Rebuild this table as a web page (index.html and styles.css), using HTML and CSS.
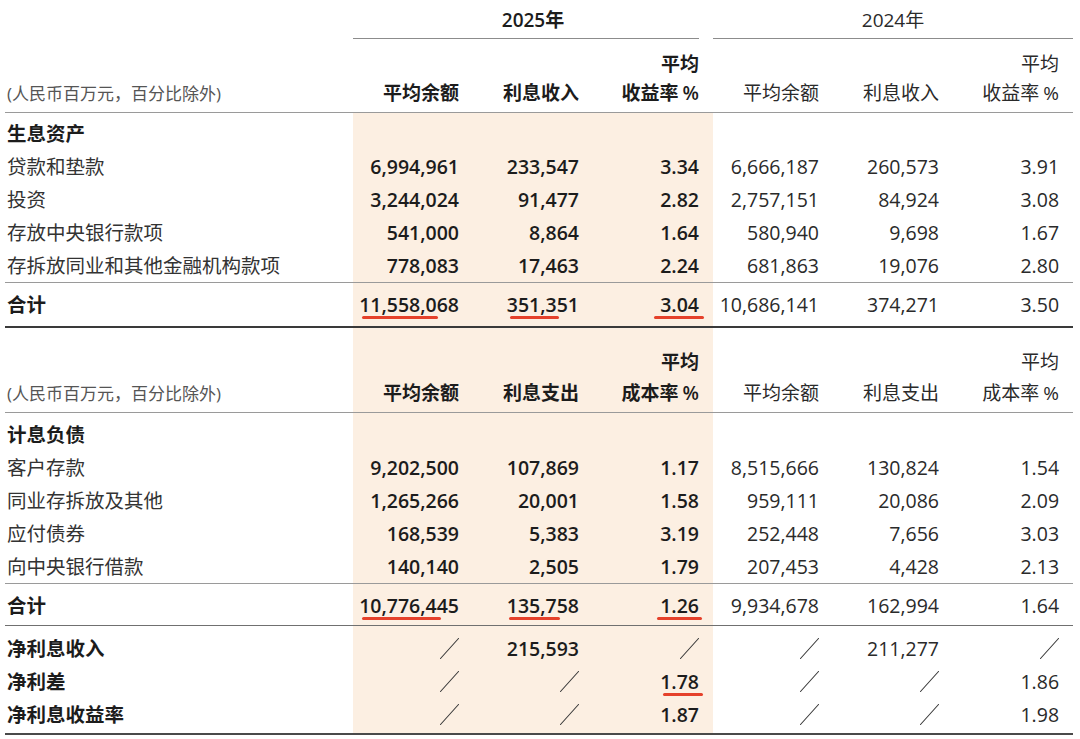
FILE: index.html
```
<!DOCTYPE html>
<html lang="zh-CN">
<head>
<meta charset="utf-8">
<title>平均余额及收益率</title>
<link rel="stylesheet" href="styles.css">
</head>
<body>
<table class="t">
  <colgroup>
    <col class="c-lab"><col class="c-n"><col class="c-n"><col class="c-n"><col class="c-n"><col class="c-n"><col class="c-n">
  </colgroup>
  <thead>
    <tr class="r-yr">
      <th class="lab"></th>
      <th colspan="3" class="yr"><div class="yr-in y25">2025年</div></th>
      <th colspan="3" class="yr"><div class="yr-in y24">2024年</div></th>
    </tr>
    <tr class="r-avg1">
      <th class="lab"></th><th></th><th></th><th class="b">平均</th><th></th><th></th><th>平均</th>
    </tr>
    <tr class="r-hd1">
      <th class="lab unit">(人民币百万元，百分比除外)</th>
      <th class="b">平均余额</th><th class="b">利息收入</th><th class="b">收益率<span class="pct">%</span></th>
      <th>平均余额</th><th>利息收入</th><th>收益率<span class="pct">%</span></th>
    </tr>
  </thead>
  <tbody>
    <tr class="first">
      <td class="lab b">生息资产</td><td class="h"></td><td class="h"></td><td class="h"></td><td></td><td></td><td></td>
    </tr>
    <tr>
      <td class="lab">贷款和垫款</td><td class="h b">6,994,961</td><td class="h b">233,547</td><td class="h b">3.34</td><td>6,666,187</td><td>260,573</td><td>3.91</td>
    </tr>
    <tr>
      <td class="lab">投资</td><td class="h b">3,244,024</td><td class="h b">91,477</td><td class="h b">2.82</td><td>2,757,151</td><td>84,924</td><td>3.08</td>
    </tr>
    <tr>
      <td class="lab">存放中央银行款项</td><td class="h b">541,000</td><td class="h b">8,864</td><td class="h b">1.64</td><td>580,940</td><td>9,698</td><td>1.67</td>
    </tr>
    <tr class="sep">
      <td class="lab">存拆放同业和其他金融机构款项</td><td class="h b">778,083</td><td class="h b">17,463</td><td class="h b">2.24</td><td>681,863</td><td>19,076</td><td>2.80</td>
    </tr>
    <tr class="tot">
      <td class="lab b">合计</td>
      <td class="h b"><span class="u">11,558,068<i class="mk mk1"></i></span></td>
      <td class="h b"><span class="u">351,351<i class="mk mk2"></i></span></td>
      <td class="h b"><span class="u">3.04<i class="mk mk3"></i></span></td>
      <td>10,686,141</td><td>374,271</td><td>3.50</td>
    </tr>
    <tr class="r-avg2">
      <th class="lab"></th><th class="h"></th><th class="h"></th><th class="h b">平均</th><th></th><th></th><th>平均</th>
    </tr>
    <tr class="r-hd2">
      <th class="lab unit">(人民币百万元，百分比除外)</th>
      <th class="h b">平均余额</th><th class="h b">利息支出</th><th class="h b">成本率<span class="pct">%</span></th>
      <th>平均余额</th><th>利息支出</th><th>成本率<span class="pct">%</span></th>
    </tr>
    <tr class="first2">
      <td class="lab b">计息负债</td><td class="h"></td><td class="h"></td><td class="h"></td><td></td><td></td><td></td>
    </tr>
    <tr>
      <td class="lab">客户存款</td><td class="h b">9,202,500</td><td class="h b">107,869</td><td class="h b">1.17</td><td>8,515,666</td><td>130,824</td><td>1.54</td>
    </tr>
    <tr>
      <td class="lab">同业存拆放及其他</td><td class="h b">1,265,266</td><td class="h b">20,001</td><td class="h b">1.58</td><td>959,111</td><td>20,086</td><td>2.09</td>
    </tr>
    <tr>
      <td class="lab">应付债券</td><td class="h b">168,539</td><td class="h b">5,383</td><td class="h b">3.19</td><td>252,448</td><td>7,656</td><td>3.03</td>
    </tr>
    <tr class="sep">
      <td class="lab">向中央银行借款</td><td class="h b">140,140</td><td class="h b">2,505</td><td class="h b">1.79</td><td>207,453</td><td>4,428</td><td>2.13</td>
    </tr>
    <tr class="tot2">
      <td class="lab b">合计</td>
      <td class="h b"><span class="u">10,776,445<i class="mk mk4"></i></span></td>
      <td class="h b"><span class="u">135,758<i class="mk mk5"></i></span></td>
      <td class="h b"><span class="u">1.26<i class="mk mk6"></i></span></td>
      <td>9,934,678</td><td>162,994</td><td>1.64</td>
    </tr>
    <tr class="first3">
      <td class="lab b">净利息收入</td>
      <td class="h"><svg class="sl" width="19" height="21" viewBox="0 0 19 21"><line x1="0.5" y1="20.5" x2="18.5" y2="0.5"/></svg></td>
      <td class="h b">215,593</td>
      <td class="h"><svg class="sl" width="19" height="21" viewBox="0 0 19 21"><line x1="0.5" y1="20.5" x2="18.5" y2="0.5"/></svg></td>
      <td><svg class="sl" width="19" height="21" viewBox="0 0 19 21"><line x1="0.5" y1="20.5" x2="18.5" y2="0.5"/></svg></td>
      <td>211,277</td>
      <td><svg class="sl" width="19" height="21" viewBox="0 0 19 21"><line x1="0.5" y1="20.5" x2="18.5" y2="0.5"/></svg></td>
    </tr>
    <tr>
      <td class="lab b">净利差</td>
      <td class="h"><svg class="sl" width="19" height="21" viewBox="0 0 19 21"><line x1="0.5" y1="20.5" x2="18.5" y2="0.5"/></svg></td>
      <td class="h"><svg class="sl" width="19" height="21" viewBox="0 0 19 21"><line x1="0.5" y1="20.5" x2="18.5" y2="0.5"/></svg></td>
      <td class="h b"><span class="u">1.78<i class="mk mk7"></i></span></td>
      <td><svg class="sl" width="19" height="21" viewBox="0 0 19 21"><line x1="0.5" y1="20.5" x2="18.5" y2="0.5"/></svg></td>
      <td><svg class="sl" width="19" height="21" viewBox="0 0 19 21"><line x1="0.5" y1="20.5" x2="18.5" y2="0.5"/></svg></td>
      <td>1.86</td>
    </tr>
    <tr class="last">
      <td class="lab b">净利息收益率</td>
      <td class="h"><svg class="sl" width="19" height="21" viewBox="0 0 19 21"><line x1="0.5" y1="20.5" x2="18.5" y2="0.5"/></svg></td>
      <td class="h"><svg class="sl" width="19" height="21" viewBox="0 0 19 21"><line x1="0.5" y1="20.5" x2="18.5" y2="0.5"/></svg></td>
      <td class="h b">1.87</td>
      <td><svg class="sl" width="19" height="21" viewBox="0 0 19 21"><line x1="0.5" y1="20.5" x2="18.5" y2="0.5"/></svg></td>
      <td><svg class="sl" width="19" height="21" viewBox="0 0 19 21"><line x1="0.5" y1="20.5" x2="18.5" y2="0.5"/></svg></td>
      <td>1.98</td>
    </tr>
  </tbody>
</table>
</body>
</html>
```

FILE: styles.css
```
html, body {
  margin: 0;
  padding: 0;
  background: #ffffff;
}

body {
  font-family: "Open Sans", "Noto Sans CJK SC", sans-serif;
  font-size: 19.5px;
  color: #222222;
}

.t {
  border-collapse: separate;
  border-spacing: 0;
  table-layout: fixed;
  width: 1068px;
  margin-left: 5px;
}

.c-lab { width: 348px; }
.c-n { width: 120px; }

.t th,
.t td {
  padding: 0 14px 0 0;
  line-height: 33px;
  text-align: right;
  font-weight: 400;
  white-space: nowrap;
  vertical-align: middle;
  color: #2a2a2a;
}

.t th {
  font-size: 19px;
}

.t .lab {
  text-align: left;
  padding-right: 0;
  padding-left: 2px;
  color: #333333;
}

.t .b {
  font-weight: 600;
  color: #1c1c1c;
}

.t .lab.b {
  font-weight: 700;
  color: #1c1c1c;
}

.t .unit {
  font-size: 17px;
  color: #555555;
  font-weight: 400;
}

.pct {
  margin-left: 4px;
}

.t .h {
  background: #fcefe2;
}

/* year header */
.t .yr {
  padding: 0;
  line-height: 36px;
  text-align: center;
}

.yr-in {
  height: 36px;
  padding-top: 2px;
  border-bottom: 1px solid #8c8c8c;
}

.y25 {
  margin-right: 14px;
  padding-left: 14px;
  font-weight: 600;
  color: #1c1c1c;
}

.y24 {
  color: #2a2a2a;
}

/* row geometry */
.t tr.r-avg1 > th {
  padding-top: 14px;
  line-height: 23px;
}

.t tr.r-hd1 > th {
  padding-top: 1px;
  padding-bottom: 2px;
  border-bottom: 1px solid #9a9a9a;
}

.t tr.first > td {
  padding-top: 4px;
}

.t tr.sep > td {
  border-bottom: 1px solid #9a9a9a;
}

.t tr.tot > td {
  line-height: 43px;
  border-bottom: 2px solid #3a3a3a;
}

.t tr.r-avg2 > th {
  padding-top: 20px;
  line-height: 29px;
}

.t tr.r-hd2 > th {
  padding-bottom: 2px;
  border-bottom: 1px solid #9a9a9a;
}

.t tr.first2 > td {
  padding-top: 5px;
}

.t tr.tot2 > td {
  padding-top: 2px;
  line-height: 39px;
  border-bottom: 1px solid #707070;
}

.t tr.first3 > td {
  padding-top: 6px;
}

.t tr.last > td {
  padding-bottom: 2px;
  border-bottom: 2px solid #4a4a4a;
}

/* red annotation underline */
.u {
  position: relative;
  display: inline-block;
}

.mk {
  position: absolute;
  top: calc(50% + 11px);
  height: 3px;
  border-radius: 2px;
  background: #e5412b;
}

.mk1 { right: 21px; width: 76px; }
.mk2 { right: 20px; width: 49px; }
.mk3 { right: -5px; width: 50px; }
.mk4 { right: 18px; width: 79px; }
.mk5 { right: 19px; width: 51px; }
.mk6 { right: -3px; width: 45px; }
.mk7 { right: -4px; width: 40px; }

/* slash placeholder */
.sl {
  display: inline-block;
  vertical-align: middle;
  margin-top: -4px;
}

.sl line {
  stroke: #3a3a3a;
  stroke-width: 1.1;
  stroke-linecap: round;
}
```
